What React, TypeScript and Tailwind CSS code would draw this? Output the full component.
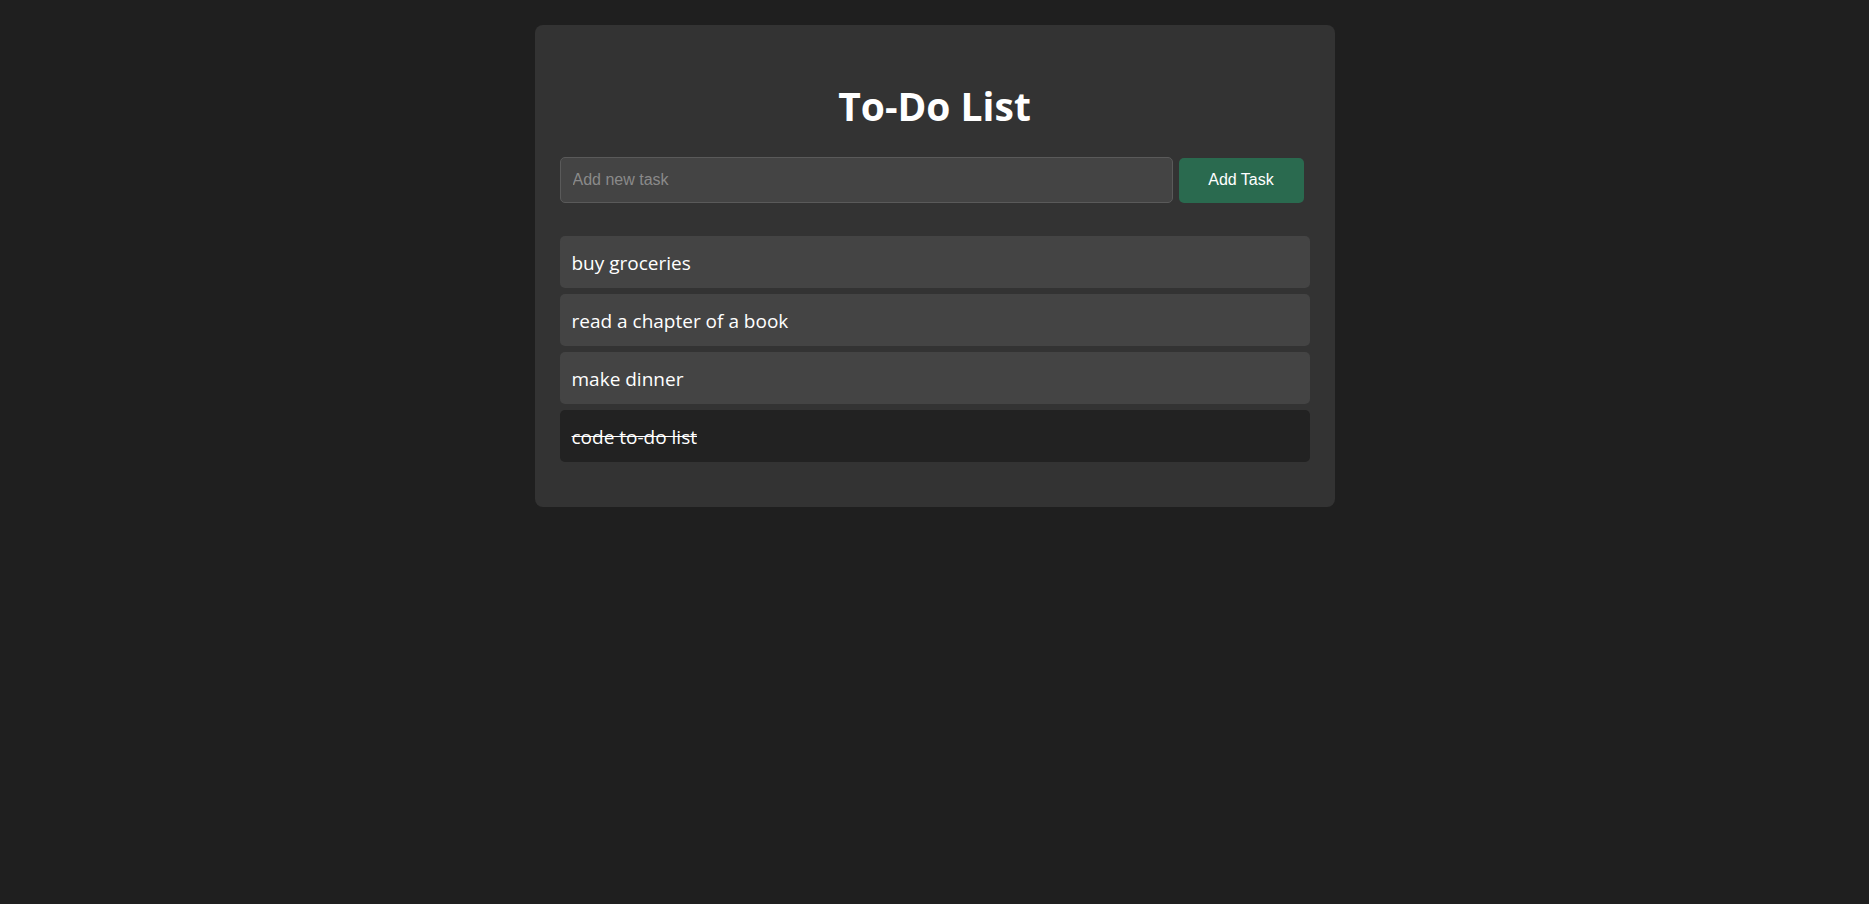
import React, { useState } from 'react';

interface Task {
  id: number;
  text: string;
  done: boolean;
}

const initialTasks: Task[] = [
  { id: 1, text: 'buy groceries', done: false },
  { id: 2, text: 'read a chapter of a book', done: false },
  { id: 3, text: 'make dinner', done: false },
  { id: 4, text: 'code to-do list', done: true },
];

export default function App() {
  const [tasks, setTasks] = useState<Task[]>(initialTasks);
  const [draft, setDraft] = useState('');

  const addTask = () => {
    const text = draft.trim();
    if (!text) return;
    setTasks((prev) => [...prev, { id: Date.now(), text, done: false }]);
    setDraft('');
  };

  const toggleTask = (id: number) => {
    setTasks((prev) => prev.map((t) => (t.id === id ? { ...t, done: !t.done } : t)));
  };

  return (
    <div className="min-h-screen w-full bg-[#1f1f1f] pt-[25px] font-['Open_Sans',sans-serif]">
      <div className="mx-auto w-[800px] rounded-[8px] bg-[#333333] px-[25px] pt-[25px] pb-[25px]">
        <h1 className="mt-[29px] mb-[25px] text-center text-[39px] font-bold leading-[53px] text-white">
          To-Do List
        </h1>

        <div className="flex items-center gap-[6px]">
          <input
            value={draft}
            onChange={(e) => setDraft(e.target.value)}
            onKeyDown={(e) => e.key === 'Enter' && addTask()}
            placeholder="Add new task"
            className="h-[46px] w-[613px] rounded-[5px] border border-[#5a5a5a] bg-[#444444] px-[12px] font-['Liberation_Sans',Arial,sans-serif] text-[16px] text-white outline-none placeholder:text-[#8a8a8a]"
          />
          <button
            onClick={addTask}
            className="h-[45px] w-[125px] rounded-[5px] bg-[#2a6a4f] font-['Liberation_Sans',Arial,sans-serif] text-[16px] text-white"
          >
            Add Task
          </button>
        </div>

        <ul className="mt-[33px] mb-[20px] flex flex-col gap-[6px]">
          {tasks.map((task) => (
            <li
              key={task.id}
              onClick={() => toggleTask(task.id)}
              className={`flex h-[52px] cursor-pointer items-center rounded-[5px] px-[12px] pt-[2px] text-[19px] text-white ${
                task.done ? 'bg-[#222222] line-through' : 'bg-[#444444]'
              }`}
            >
              {task.text}
            </li>
          ))}
        </ul>
      </div>
    </div>
  );
}
